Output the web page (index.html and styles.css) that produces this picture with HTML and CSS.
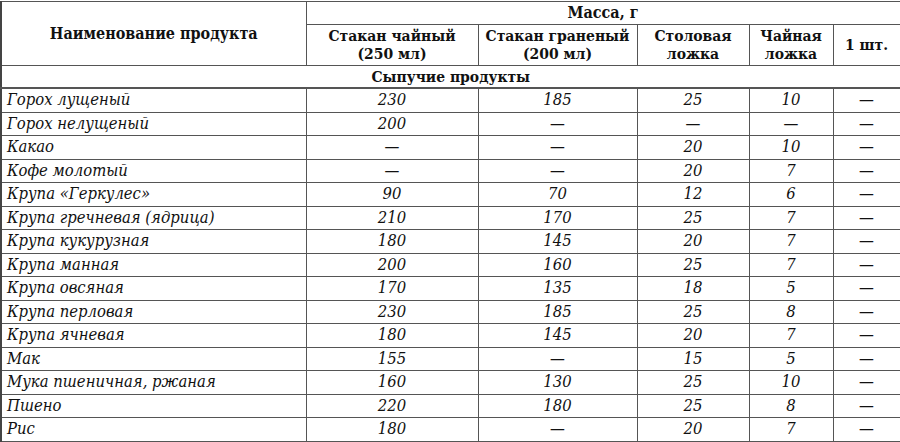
FILE: index.html
```html
<!DOCTYPE html>
<html lang="ru">
<head>
<meta charset="utf-8">
<link rel="stylesheet" href="styles.css">
</head>
<body>
<table class="tbl">
  <colgroup>
    <col class="c-name"><col class="c-a"><col class="c-b"><col class="c-c"><col class="c-d"><col class="c-e">
  </colgroup>
  <thead>
    <tr class="h1">
      <th rowspan="2" class="th-name">Наименование продукта</th>
      <th colspan="5">Масса, г</th>
    </tr>
    <tr class="h2">
      <th>Стакан чайный<br>(250 мл)</th>
      <th>Стакан граненый<br>(200 мл)</th>
      <th>Столовая<br>ложка</th>
      <th>Чайная<br>ложка</th>
      <th>1 шт.</th>
    </tr>
  </thead>
  <tbody>
    <tr class="sec"><td colspan="6">Сыпучие продукты</td></tr>
    <tr><td class="nm">Горох лущеный</td><td>230</td><td>185</td><td>25</td><td>10</td><td class="d">—</td></tr>
    <tr><td class="nm">Горох нелущеный</td><td>200</td><td class="d">—</td><td class="d">—</td><td class="d">—</td><td class="d">—</td></tr>
    <tr><td class="nm">Какао</td><td class="d">—</td><td class="d">—</td><td>20</td><td>10</td><td class="d">—</td></tr>
    <tr><td class="nm">Кофе молотый</td><td class="d">—</td><td class="d">—</td><td>20</td><td>7</td><td class="d">—</td></tr>
    <tr><td class="nm">Крупа «Геркулес»</td><td>90</td><td>70</td><td>12</td><td>6</td><td class="d">—</td></tr>
    <tr><td class="nm">Крупа гречневая (ядрица)</td><td>210</td><td>170</td><td>25</td><td>7</td><td class="d">—</td></tr>
    <tr><td class="nm">Крупа кукурузная</td><td>180</td><td>145</td><td>20</td><td>7</td><td class="d">—</td></tr>
    <tr><td class="nm">Крупа манная</td><td>200</td><td>160</td><td>25</td><td>7</td><td class="d">—</td></tr>
    <tr><td class="nm">Крупа овсяная</td><td>170</td><td>135</td><td>18</td><td>5</td><td class="d">—</td></tr>
    <tr><td class="nm">Крупа перловая</td><td>230</td><td>185</td><td>25</td><td>8</td><td class="d">—</td></tr>
    <tr><td class="nm">Крупа ячневая</td><td>180</td><td>145</td><td>20</td><td>7</td><td class="d">—</td></tr>
    <tr><td class="nm">Мак</td><td>155</td><td class="d">—</td><td>15</td><td>5</td><td class="d">—</td></tr>
    <tr><td class="nm">Мука пшеничная, ржаная</td><td>160</td><td>130</td><td>25</td><td>10</td><td class="d">—</td></tr>
    <tr><td class="nm">Пшено</td><td>220</td><td>180</td><td>25</td><td>8</td><td class="d">—</td></tr>
    <tr><td class="nm">Рис</td><td>180</td><td class="d">—</td><td>20</td><td>7</td><td class="d">—</td></tr>
  </tbody>
</table>
</body>
</html>
```
FILE: styles.css
```css
html, body {
  margin: 0;
  padding: 0;
  background: #fff;
}
.tbl {
  border-collapse: collapse;
  table-layout: fixed;
  width: 899px;
  margin: 1px 0 0 0;
  font-family: "DejaVu Serif", "Liberation Serif", serif;
  font-stretch: condensed;
  color: #111;
  border-left: 2px solid #444;
  border-right: 1px solid #444;
  border-bottom: 1px solid #444;
}
.c-name { width: 305px; }
.c-a { width: 172px; }
.c-b { width: 159px; }
.c-c { width: 112px; }
.c-d { width: 84px; }
.c-e { width: 67px; }
th {
  font-weight: bold;
  font-size: 16px;
  line-height: 18px;
  border: 1px solid #555;
  padding: 0;
  text-align: center;
  vertical-align: middle;
}
.h1 th { height: 22px; }
.h2 th { height: 40px; }
.h2 th {
  font-size: 15.5px;
}
.sec td {
  height: 21px;
  font-weight: bold;
  font-style: normal;
  font-size: 15.5px;
  text-align: center;
  border-bottom: 2px solid #555;
  padding: 0;
}
tbody td {
  border: 1px solid #555;
  padding: 0;
  height: 22.5px;
  font-size: 16.5px;
  font-style: italic;
  text-align: center;
  vertical-align: middle;
  line-height: 18px;
}
tbody td.nm {
  text-align: left;
  padding-left: 5px;
  font-size: 16.5px;
}
tbody td.d {
  font-style: normal;
}
```
